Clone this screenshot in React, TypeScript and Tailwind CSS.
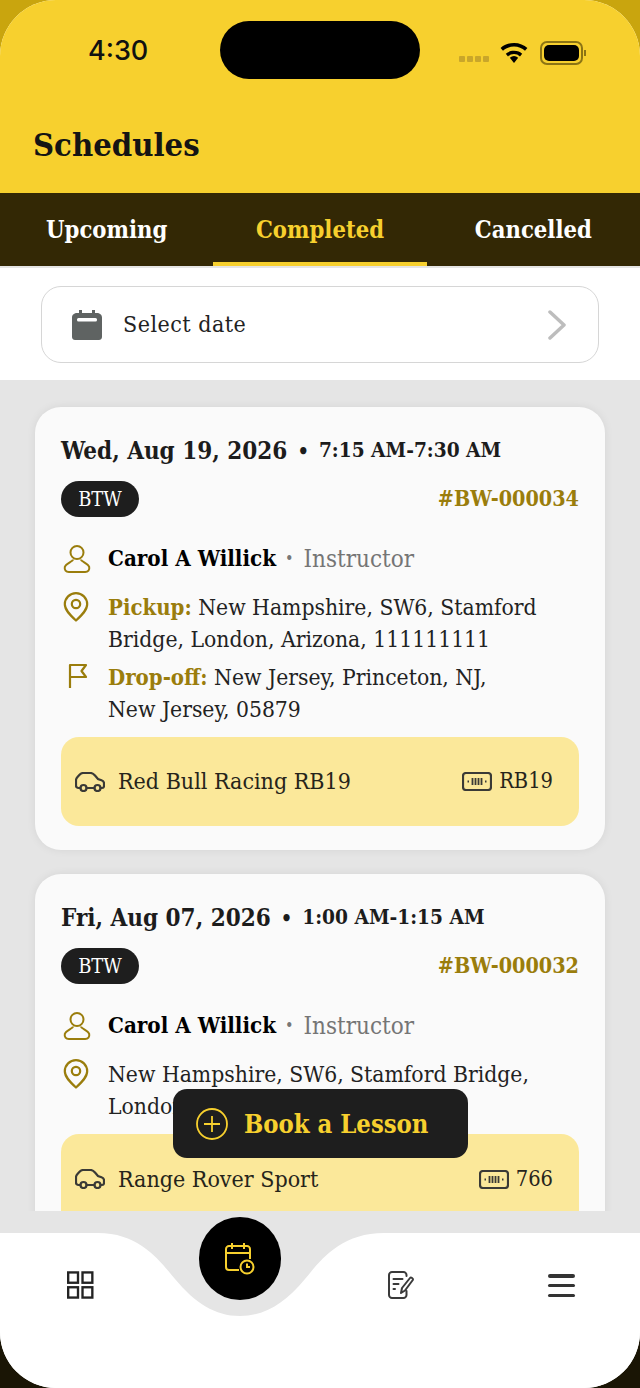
import React from 'react';

const GOLD = '#9a7d0c';

const PersonIcon = () => (
  <svg width="28" height="30" viewBox="0 0 28 30" fill="none" stroke={GOLD} strokeWidth="2">
    <circle cx="14" cy="8.500" r="6.500" />
    <path d="M10 15.500c0 2-7.500 4-8.200 7.500-.6 3 1.200 5 4 5h16.400c2.800 0 4.600-2 4-5-.7-3.500-8.200-5.500-8.200-7.500" />
  </svg>
);

const PinIcon = () => (
  <svg width="26" height="30" viewBox="0 0 26 30" fill="none" stroke={GOLD} strokeWidth="2.200">
    <path d="M13 28.500C7 23 1.800 18 1.800 12.300a11.200 11.200 0 0 1 22.400 0C24.200 18 19 23 13 28.500Z" strokeLinejoin="round" />
    <circle cx="13" cy="12" r="4.200" />
  </svg>
);

const FlagIcon = () => (
  <svg width="20" height="26" viewBox="0 0 20 26" fill="none" stroke={GOLD} strokeWidth="2.200" strokeLinejoin="round">
    <path d="M2 25V2h16l-4.500 6 4.500 6H2" />
  </svg>
);

const CarIcon = () => (
  <svg width="30" height="20" viewBox="0 0 30 20" fill="none" stroke="#3a3a36" strokeWidth="2.200">
    <path d="M5.500 16H3.500C2 16 1 15 1 13.500V8c0-1.200.6-2 1.500-3l1.800-2C5.200 2 6.300 1 8 1h7.500c2 0 3 .8 4.500 2.500L23 7l3.500 1.200c1.500.5 2.500 1.500 2.500 3V14c0 1.300-.8 2-2 2h-1.500M11.500 16h8" strokeLinecap="round" />
    <circle cx="8.500" cy="16" r="3" />
    <circle cx="22.500" cy="16" r="3" />
  </svg>
);

const PlateIcon = () => (
  <svg width="30" height="19" viewBox="0 0 30 19" fill="none" stroke="#3a3a36">
    <rect x="1" y="1" width="28" height="17" rx="3" strokeWidth="2.200" />
    <path d="M5.500 9.500h1.500M23 9.500h1.500M10.500 6v7M13.500 6v7M16.500 6v7M19.500 6v7" strokeWidth="1.800" />
  </svg>
);

const Vehicle = ({ name, plate, clip }: { name: string; plate: string; clip?: boolean }) => (
  <div className={`flex items-center bg-[#fbe89a] pl-[14px] pr-[26px] ${clip ? 'h-[90px] rounded-t-[18px]' : 'h-[89px] rounded-[18px]'}`}>
    <CarIcon />
    <span className="ml-[13px] flex-1 text-[23px] text-[#26241a]">{name}</span>
    <PlateIcon />
    <span className="ml-[7px] text-[21.700px] text-[#26241a]">{plate}</span>
  </div>
);

const CardHead = ({ date, time, code }: { date: string; time: string; code: string }) => (
  <>
    <div className="flex h-[33px] items-center whitespace-nowrap font-bold text-[#1c1c1c]">
      <span className="text-[24px]">{date}</span>
      <span className="mx-[10px] text-[20px]">•</span>
      <span className="text-[20.700px]">{time}</span>
    </div>
    <div className="mt-[14px] flex items-center justify-between">
      <span className="flex h-[36px] w-[78px] items-center justify-center rounded-full bg-[#1e1e1e] text-[20px] text-white">BTW</span>
      <span className="text-[21.400px] font-bold text-[#9a7d0c]">{code}</span>
    </div>
    <div className="mt-[26px] flex h-[32px] items-center">
      <div className="flex w-[47px] shrink-0 pl-[2px]"><PersonIcon /></div>
      <span className="text-[22.200px] font-bold text-black">Carol A Willick</span>
      <span className="ml-[9px] text-[16px] text-[#777]">•</span>
      <span className="ml-[10px] text-[24px] text-[#757575]">Instructor</span>
    </div>
  </>
);

export default function App() {
  return (
    <div className="h-[1388px] w-[640px] overflow-hidden bg-[linear-gradient(#c9a50e_0%,#c9a50e_20%,#1a1505_80%,#1a1505_100%)] font-['DejaVu_Serif_Condensed','DejaVu_Serif',serif]">
      <div className="relative flex h-full flex-col overflow-hidden rounded-[56px] bg-white">
        {/* header */}
        <header className="h-[193px] shrink-0 bg-[#f7d02e]">
          <div className="flex h-[102px] items-start">
            <span className="ml-[88px] mt-[33px] w-[60px] font-['Inter',sans-serif] text-[27px] font-medium leading-[36px] text-[#111]">4:30</span>
            <div className="ml-[72px] mt-[21px] h-[58px] w-[200px] rounded-full bg-black" />
            <div className="ml-[39px] mt-[41px] flex items-center">
              <div className="mt-[12px] flex gap-[2px]">
                {[0, 1, 2, 3].map((i) => <span key={i} className="h-[6px] w-[6px] rounded-[1px] bg-[#c9a62a]" />)}
              </div>
              <svg className="ml-[11px]" width="28" height="20" viewBox="0 0 28 20" fill="black">
                <path d="M14 20l-4.200-5.200a6.500 6.500 0 0 1 8.400 0Z" />
                <path d="M14 7.800c-3.400 0-6.400 1.200-8.200 3l2.200 2.600a9 9 0 0 1 12 0l2.200-2.600c-1.800-1.800-4.800-3-8.200-3Z" />
                <path d="M14 0C8.600 0 3.800 2 .6 5l2.400 2.800C5.800 5.200 9.700 3.500 14 3.500s8.200 1.700 11 4.300L27.400 5C24.200 2 19.400 0 14 0Z" />
              </svg>
              <div className="ml-[12px] flex h-[24px] w-[43px] items-center justify-center rounded-[7px] border-2 border-[#8c7414]">
                <div className="h-[16px] w-[35px] rounded-[5px] bg-black" />
              </div>
              <div className="ml-[1px] h-[6px] w-[1.500px] bg-[#8c7414]" />
            </div>
          </div>
          <h1 className="ml-[33px] mt-[18px] text-[32.500px] font-bold leading-[50px] text-[#141414]">Schedules</h1>
        </header>

        {/* tabs */}
        <nav className="grid h-[73px] shrink-0 grid-cols-3 bg-[#332805]">
          <div className="flex items-center justify-center pt-[2px] text-[23.600px] font-bold text-white">Upcoming</div>
          <div className="flex items-center justify-center border-b-4 border-[#f7d02e] pt-[6px] text-[23.600px] font-bold text-[#f7d02e]">Completed</div>
          <div className="flex items-center justify-center pt-[2px] text-[23.600px] font-bold text-white">Cancelled</div>
        </nav>

        {/* date filter */}
        <div className="h-[114px] shrink-0 border-t-2 border-[#e5e5e5] bg-white px-[41px] pt-[18px]">
          <div className="flex h-[77px] items-center rounded-[20px] border border-[#d6d6d6] bg-white pl-[30px] pr-[32px]">
            <svg width="30" height="30" viewBox="0 0 30 30" fill="#5f6362">
              <path d="M7 0h3v3h10V0h3v3h2c2.500 0 5 1.500 5 4.500V27c0 2-1.500 3-3 3H3c-1.500 0-3-1-3-3V7.500C0 4.500 2.500 3 5 3h2Z" />
              <rect x="5" y="8" width="20" height="3.500" rx="1.500" fill="white" />
            </svg>
            <span className="ml-[21px] flex-1 text-[23px] tracking-[0.5px] text-[#222]">Select date</span>
            <svg width="18" height="30" viewBox="0 0 18 30" fill="none" stroke="#bdbdbd" strokeWidth="3.500" strokeLinecap="round" strokeLinejoin="round">
              <path d="M2 2l14 13L2 28" />
            </svg>
          </div>
        </div>

        {/* schedule list */}
        <main className="min-h-0 flex-1 overflow-hidden bg-[#e5e5e5] px-[35px] pt-[27px]">
          <article className="rounded-[26px] bg-[#fafafa] px-[26px] pb-[24px] pt-[27px] shadow-[0_0_10px_rgba(0,0,0,0.07)]">
            <CardHead date="Wed, Aug 19, 2026" time="7:15 AM-7:30 AM" code="#BW-000034" />
            <div className="mt-[16px] flex text-[22.700px] leading-[32px] text-[#222]">
              <div className="w-[47px] shrink-0 pl-[2px] pt-[1px]"><PinIcon /></div>
              <p><b className="text-[22px] text-[#9a7d0c]">Pickup:</b> New Hampshire, SW6, Stamford<br />Bridge, London, Arizona, 111111111</p>
            </div>
            <div className="mt-[6px] flex text-[22.700px] leading-[32px] text-[#222]">
              <div className="w-[47px] shrink-0 pl-[7px] pt-[2px]"><FlagIcon /></div>
              <p><b className="text-[22px] text-[#9a7d0c]">Drop-off:</b> New Jersey, Princeton, NJ,<br />New Jersey, 05879</p>
            </div>
            <div className="mt-[12px]"><Vehicle name="Red Bull Racing RB19" plate="RB19" /></div>
          </article>

          <article className="mt-[24px] rounded-[26px] bg-[#fafafa] px-[26px] pb-[24px] pt-[27px] shadow-[0_0_10px_rgba(0,0,0,0.07)]">
            <CardHead date="Fri, Aug 07, 2026" time="1:00 AM-1:15 AM" code="#BW-000032" />
            <div className="mt-[16px] flex text-[22.700px] leading-[32px] text-[#222]">
              <div className="w-[47px] shrink-0 pl-[2px] pt-[1px]"><PinIcon /></div>
              <p>New Hampshire, SW6, Stamford Bridge,<br />London, Arizona, 111111111</p>
            </div>
            <div className="mt-[12px]"><Vehicle name="Range Rover Sport" plate="766" clip /></div>
          </article>
        </main>

        {/* floating action */}
        <button className="absolute left-[173px] top-[1089px] flex h-[69px] w-[295px] items-center rounded-[14px] bg-[#1e1e1e] pl-[23px] text-[#f7d02e]">
          <svg width="32" height="32" viewBox="0 0 32 32" fill="none" stroke="#f7d02e" strokeWidth="1.800">
            <circle cx="16" cy="16" r="15" />
            <path d="M16 8v16M8 16h16" />
          </svg>
          <span className="ml-[16px] pt-[2px] text-[25.400px] font-bold">Book a Lesson</span>
        </button>

        {/* bottom nav */}
        <div className="h-[22px] shrink-0 bg-[#e5e5e5]" />
        <footer className="relative flex h-[155px] shrink-0 justify-between bg-white pl-[67px] pr-[65px] pt-[38px]">
          <svg className="absolute left-[98px] top-0" width="286" height="83" viewBox="0 0 286 83" fill="#e5e5e5">
            <path d="M0 0C42 0 62 28 77 46C97 70 117 83 142 83C167 83 187 70 207 46C222 28 242 0 286 0Z" />
          </svg>
          <div className="absolute left-[199px] top-[-16px] flex h-[83px] w-[82px] items-center justify-center rounded-full bg-black">
            <svg width="30" height="32" viewBox="0 0 30 32" fill="none" stroke="#f7d02e" strokeWidth="2">
              <path d="M14 27H4c-1.500 0-3-1-3-3V6c0-1.500 1.500-3 3-3h18c1.500 0 3 1.500 3 3v10M1 10h24M7 0v6M19 0v6" />
              <circle cx="22" cy="24" r="6.500" />
              <path d="M22 20.500V24h3" />
            </svg>
          </div>
          <svg width="27" height="28" viewBox="0 0 27 28" fill="none" stroke="#232323" strokeWidth="2.400">
            <rect x="1.200" y="1.200" width="10" height="10.500" />
            <rect x="15.800" y="1.200" width="10" height="10.500" />
            <rect x="1.200" y="16.300" width="10" height="10.500" />
            <rect x="15.800" y="16.300" width="10" height="10.500" />
          </svg>
          <div className="ml-[294px]">
            <svg width="26" height="28" viewBox="0 0 26 28" fill="none" stroke="#3a3a3a" strokeWidth="2" strokeLinecap="round" strokeLinejoin="round">
              <path d="M18.500 5V4c0-1.600-1.400-3-3-3H4C2.400 1 1 2.400 1 4v20c0 1.600 1.400 3 3 3h11.500c1.600 0 3-1.400 3-3v-4" />
              <path d="M5.500 8h9M5.500 13h5M5.500 18h1.500M13 22l1-5L22 7c1-1.200 3.500.5 2.800 2L17 19.500Z" />
            </svg>
          </div>
          <div className="ml-[134px] mt-[3px] flex h-[23px] w-[28px] flex-col justify-between">
            <span className="h-[3.500px] rounded-full bg-[#333]" />
            <span className="h-[3.500px] rounded-full bg-[#333]" />
            <span className="h-[3.500px] rounded-full bg-[#333]" />
          </div>
        </footer>
      </div>
    </div>
  );
}
